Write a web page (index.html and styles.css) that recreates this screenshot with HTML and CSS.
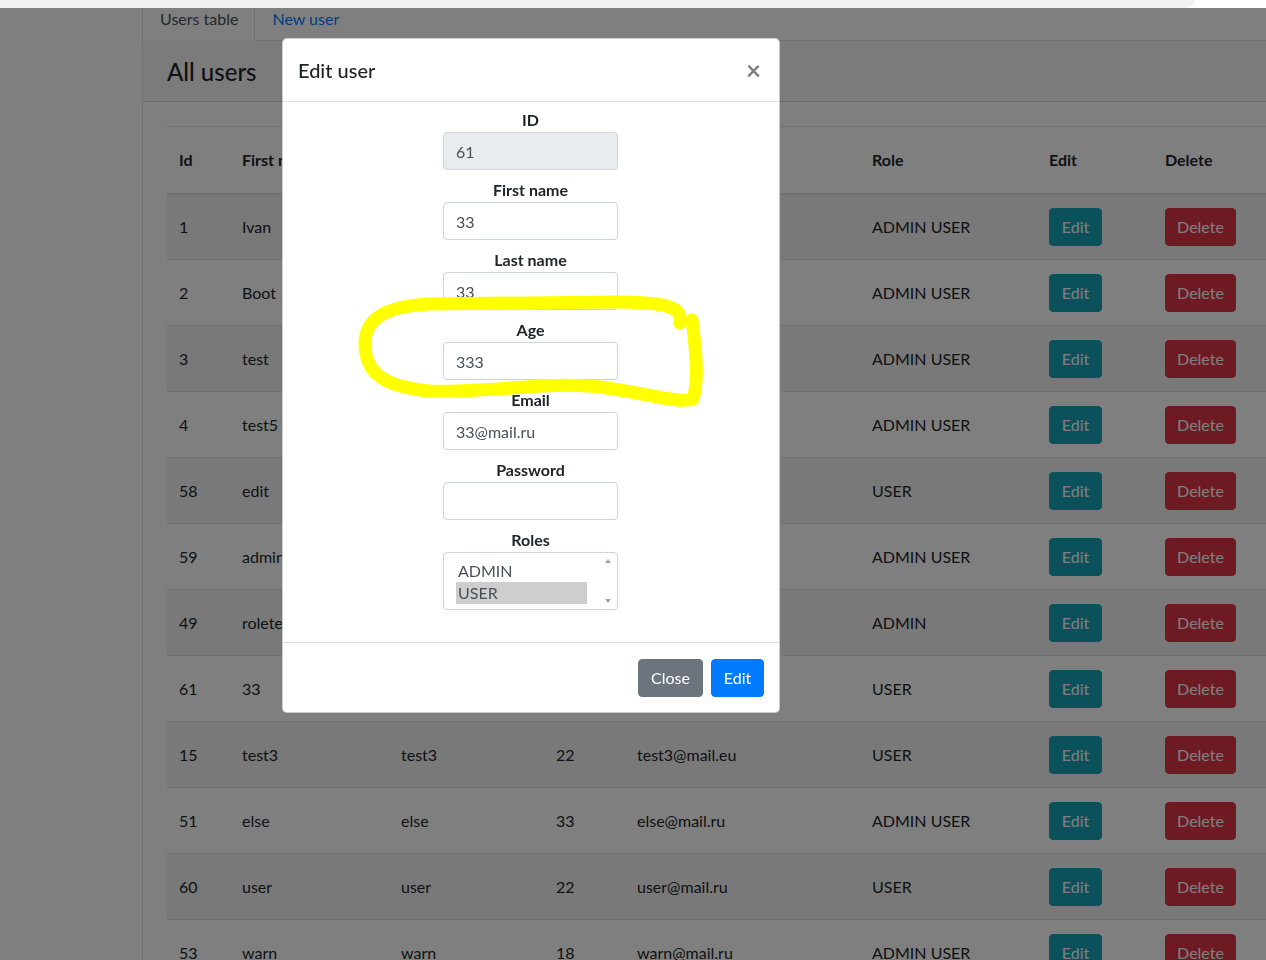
FILE: index.html
```html
<!DOCTYPE html>
<html lang="en">
<head>
<meta charset="utf-8">
<title>Admin panel – Edit user</title>
<link rel="stylesheet" href="styles.css">
</head>
<body>
<div class="topbar"><div class="topbar-tab"></div></div>

<div class="layout">
  <aside class="sidebar"></aside>
  <main class="main">
    <nav class="tabs">
      <a class="tab active">Users table</a>
      <a class="tab">New user</a>
    </nav>
    <section class="card">
      <header class="card-header"><h2>All users</h2></header>
      <div class="card-body">
        <table class="users">
          <colgroup>
            <col class="c-id"><col class="c-first"><col class="c-last"><col class="c-age"><col class="c-email"><col class="c-role"><col class="c-edit"><col class="c-del">
          </colgroup>
          <thead>
            <tr><th>Id</th><th>First name</th><th>Last name</th><th>Age</th><th>Email</th><th>Role</th><th>Edit</th><th>Delete</th></tr>
          </thead>
          <tbody>
            <tr><td>1</td><td>Ivan</td><td>Ivanov</td><td>25</td><td>ivan@mail.ru</td><td>ADMIN USER</td><td><button class="btn info">Edit</button></td><td><button class="btn danger">Delete</button></td></tr>
            <tr><td>2</td><td>Boot</td><td>Boot</td><td>30</td><td>boot@mail.ru</td><td>ADMIN USER</td><td><button class="btn info">Edit</button></td><td><button class="btn danger">Delete</button></td></tr>
            <tr><td>3</td><td>test</td><td>test</td><td>20</td><td>test@mail.ru</td><td>ADMIN USER</td><td><button class="btn info">Edit</button></td><td><button class="btn danger">Delete</button></td></tr>
            <tr><td>4</td><td>test5</td><td>test5</td><td>21</td><td>test5@mail.ru</td><td>ADMIN USER</td><td><button class="btn info">Edit</button></td><td><button class="btn danger">Delete</button></td></tr>
            <tr><td>58</td><td>edit</td><td>edit</td><td>44</td><td>edit@mail.ru</td><td>USER</td><td><button class="btn info">Edit</button></td><td><button class="btn danger">Delete</button></td></tr>
            <tr><td>59</td><td>admin</td><td>admin</td><td>35</td><td>admin@mail.ru</td><td>ADMIN USER</td><td><button class="btn info">Edit</button></td><td><button class="btn danger">Delete</button></td></tr>
            <tr><td>49</td><td>roletest</td><td>roletest</td><td>27</td><td>role@mail.ru</td><td>ADMIN</td><td><button class="btn info">Edit</button></td><td><button class="btn danger">Delete</button></td></tr>
            <tr><td>61</td><td>33</td><td>33</td><td>333</td><td>33@mail.ru</td><td>USER</td><td><button class="btn info">Edit</button></td><td><button class="btn danger">Delete</button></td></tr>
            <tr><td>15</td><td>test3</td><td>test3</td><td>22</td><td>test3@mail.eu</td><td>USER</td><td><button class="btn info">Edit</button></td><td><button class="btn danger">Delete</button></td></tr>
            <tr><td>51</td><td>else</td><td>else</td><td>33</td><td>else@mail.ru</td><td>ADMIN USER</td><td><button class="btn info">Edit</button></td><td><button class="btn danger">Delete</button></td></tr>
            <tr><td>60</td><td>user</td><td>user</td><td>22</td><td>user@mail.ru</td><td>USER</td><td><button class="btn info">Edit</button></td><td><button class="btn danger">Delete</button></td></tr>
            <tr><td>53</td><td>warn</td><td>warn</td><td>18</td><td>warn@mail.ru</td><td>ADMIN USER</td><td><button class="btn info">Edit</button></td><td><button class="btn danger">Delete</button></td></tr>
          </tbody>
        </table>
      </div>
    </section>
  </main>
</div>

<div class="backdrop"></div>

<div class="modal">
  <header class="modal-header">
    <h5 class="modal-title">Edit user</h5>
    <span class="modal-close">&times;</span>
  </header>
  <div class="modal-body">
    <div class="group"><label>ID</label><input class="field readonly" value="61" readonly></div>
    <div class="group"><label>First name</label><input class="field" value="33"></div>
    <div class="group"><label>Last name</label><input class="field" value="33"></div>
    <div class="group"><label>Age</label><input class="field" value="333"></div>
    <div class="group"><label>Email</label><input class="field" value="33@mail.ru"></div>
    <div class="group"><label>Password</label><input class="field" type="password" value=""></div>
    <div class="group"><label>Roles</label>
      <div class="listbox">
        <div class="options">
          <div class="option">ADMIN</div>
          <div class="option selected">USER</div>
        </div>
        <div class="scroll">
          <span class="arrow up"></span>
          <span class="arrow down"></span>
        </div>
      </div>
    </div>
  </div>
  <footer class="modal-footer">
    <button class="btn secondary w-close">Close</button>
    <button class="btn primary w-edit">Edit</button>
  </footer>
</div>

<svg class="highlight" width="1266" height="960" viewBox="0 0 1266 960">
  <path d="M680 323 C683 306 665 302 610 302 L430 304 C385 306 364 319 365 346 C366 373 384 387 430 391 C490 393 545 381 600 387 C650 394 680 404 693 399 C699 380 696 350 692 320" fill="none" stroke="#ffff00" stroke-width="13" stroke-linecap="round" stroke-linejoin="round"/>
</svg>
</body>
</html>
```
FILE: styles.css
```css
* { box-sizing: border-box; }

html, body {
  margin: 0;
  height: 100%;
  overflow: hidden;
}

body {
  font-family: "Lato", "Open Sans", "Liberation Sans", sans-serif;
  font-size: 16px;
  line-height: 1.5;
  color: #212529;
  background: #fff;
}

.topbar {
  position: fixed;
  top: 0;
  left: 0;
  right: 0;
  height: 8px;
  background: #fff;
  z-index: 30;
}
.topbar-tab {
  width: 1195px;
  height: 8px;
  background: #f1f1f1;
  border-bottom-right-radius: 8px;
}

.layout {
  display: grid;
  grid-template-columns: 142px 1fr;
  min-height: 100%;
}

.sidebar { background: #fff; }

.main {
  border-left: 1px solid #dee2e6;
  background: #fff;
  min-width: 0;
}

.tabs {
  display: flex;
  border-bottom: 1px solid #dee2e6;
}
.tab {
  display: block;
  padding: 6px 16px 9px;
  color: #007bff;
  border: 1px solid transparent;
  margin-bottom: -1px;
}
.tab.active {
  color: #495057;
  background: #fff;
  border-color: #dee2e6 #dee2e6 #fff;
  border-left-color: transparent;
}

.card { background: #fff; }

.card-header {
  height: 61px;
  padding: 3px 24px 0;
  display: flex;
  align-items: center;
  background: rgba(0, 0, 0, 0.03);
  border-bottom: 1px solid rgba(0, 0, 0, 0.125);
}
.card-header h2 {
  margin: 0;
  font-size: 24px;
  font-weight: 500;
  line-height: 1.2;
}

.card-body { padding: 24px 0 0 24px; }

.users {
  border-collapse: collapse;
  table-layout: fixed;
  width: 1111px;
}
.c-id { width: 63px; }
.c-first { width: 159px; }
.c-last { width: 155px; }
.c-age { width: 81px; }
.c-email { width: 235px; }
.c-role { width: 177px; }
.c-edit { width: 116px; }
.c-del { width: 125px; }

.users th,
.users td {
  padding: 0 12px;
  text-align: left;
  vertical-align: middle;
  border-top: 1px solid #dee2e6;
  white-space: nowrap;
  overflow: hidden;
}
.users th {
  height: 67px;
  font-weight: 700;
  border-bottom: 2px solid #dee2e6;
}
.users td { height: 66px; }
.users tbody tr:nth-child(odd) { background: rgba(0, 0, 0, 0.05); }

.btn {
  display: inline-block;
  height: 38px;
  padding: 6px 0;
  font: inherit;
  line-height: 24px;
  text-align: center;
  color: #fff;
  border: 1px solid transparent;
  border-radius: 4px;
}
.btn.info { background: #17a2b8; border-color: #17a2b8; width: 53px; }
.btn.danger { background: #dc3545; border-color: #dc3545; width: 71px; }
.btn.secondary { background: #6c757d; border-color: #6c757d; }
.btn.primary { background: #007bff; border-color: #007bff; }
.w-close { width: 65px; }
.w-edit { width: 53px; }

.backdrop {
  position: fixed;
  top: 8px;
  left: 0;
  right: 0;
  bottom: 0;
  background: rgba(0, 0, 0, 0.5);
  z-index: 10;
}

.modal {
  position: absolute;
  top: 38px;
  left: 282px;
  width: 498px;
  background: #fff;
  border: 1px solid rgba(0, 0, 0, 0.2);
  border-radius: 5px;
  z-index: 20;
}

.modal-header {
  display: flex;
  align-items: center;
  justify-content: space-between;
  padding: 16px 16px 16px 15px;
  border-bottom: 1px solid #dee2e6;
}
.modal-title {
  margin: 0;
  font-size: 20px;
  font-weight: 500;
  line-height: 30px;
}
.modal-close {
  font-size: 26px;
  font-weight: 700;
  line-height: 1;
  color: #000;
  opacity: 0.5;
  padding-right: 2px;
}

.modal-body {
  padding: 6px 16px 32px 15px;
  display: flex;
  flex-direction: column;
  align-items: center;
  gap: 8px;
}
.group {
  display: flex;
  flex-direction: column;
  align-items: center;
}
.group label {
  font-weight: 700;
  line-height: 24px;
}

.field {
  width: 175px;
  height: 38px;
  padding: 6px 12px;
  font: inherit;
  color: #495057;
  background: #fff;
  border: 1px solid #ced4da;
  border-radius: 4px;
  outline: none;
}
.field.readonly { background: #e9ecef; }

.listbox {
  width: 175px;
  height: 58px;
  border: 1px solid #ced4da;
  border-radius: 4px;
  display: flex;
  padding: 6px 1px 6px 12px;
  color: #495057;
}
.options {
  flex: 1;
  padding-top: 1px;
}
.option {
  line-height: 22px;
  padding-left: 2px;
}
.option.selected { background: #cecece; }

.scroll {
  width: 17px;
  margin: -5px 0 -5px 12px;
  display: flex;
  flex-direction: column;
  justify-content: space-between;
  align-items: center;
  padding: 5px 0;
}
.arrow {
  width: 0;
  height: 0;
  border-left: 3px solid transparent;
  border-right: 3px solid transparent;
}
.arrow.up { border-bottom: 4px solid #a3a3a3; }
.arrow.down { border-top: 4px solid #a3a3a3; }

.modal-footer {
  display: flex;
  justify-content: flex-end;
  gap: 8px;
  padding: 16px 15px 15px;
  border-top: 1px solid #dee2e6;
}

.highlight {
  position: absolute;
  top: 0;
  left: 0;
  z-index: 25;
  pointer-events: none;
}
```
